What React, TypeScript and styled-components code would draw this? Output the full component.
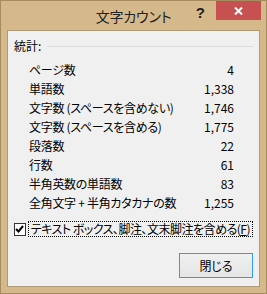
import React from 'react';
import styled, { createGlobalStyle } from 'styled-components';

const GlobalStyle = createGlobalStyle`
  html, body {
    margin: 0;
    padding: 0;
    background: #d5b98b;
  }
  body {
    font-family: "Noto Sans CJK JP", "Noto Sans", sans-serif;
    font-feature-settings: "palt";
    color: #000;
  }
`;

const Window = styled.div`
  width: 267px;
  height: 294px;
  box-sizing: border-box;
  background: #d5b98b;
  border: 1px solid #a68c5f;
  display: flex;
  flex-direction: column;
`;

const TitleBar = styled.div`
  height: 29px;
  display: grid;
  grid-template-columns: 1fr auto 1fr;
  align-items: start;
`;

const Title = styled.div`
  font-size: 14px;
  line-height: 28px;
  color: #222;
  letter-spacing: -0.2px;
  padding-top: 1px;
`;

const Controls = styled.div`
  display: flex;
  justify-content: flex-end;
  align-items: flex-start;
  padding-right: 5px;
`;

const HelpButton = styled.div`
  font-family: "Liberation Sans", Arial, sans-serif;
  font-weight: 700;
  font-size: 15px;
  line-height: 15px;
  color: #222;
  margin: 4px 11px 0 0;
`;

const CloseButton = styled.div`
  width: 45px;
  height: 19px;
  background: #c75050;
  display: flex;
  align-items: center;
  justify-content: center;
`;

const Panel = styled.div`
  flex: 1;
  margin: 0 6px 6px;
  background: #f0f0f0;
  border: 1px solid #ad9a78;
  display: flex;
  flex-direction: column;
  padding: 7px 6px 8px 6px;
`;

const SectionHeader = styled.div`
  display: flex;
  align-items: center;
  gap: 6px;
  font-size: 12px;
  line-height: 16px;
`;

const Rule = styled.div`
  flex: 1;
  height: 1px;
  background: #dcdcdc;
`;

const StatList = styled.div`
  display: grid;
  grid-template-columns: 1fr auto;
  grid-auto-rows: 19px;
  align-items: center;
  margin: 6px 19px 0 15px;
  font-size: 12px;
`;

const StatLabel = styled.div`
  white-space: nowrap;
  letter-spacing: -0.3px;
`;

const StatValue = styled.div`
  text-align: right;
`;

const CheckRow = styled.label`
  display: flex;
  align-items: center;
  gap: 2px;
  margin-top: 9px;
  font-size: 12px;
`;

const CheckBox = styled.div`
  width: 11px;
  height: 11px;
  border: 1px solid #333;
  background: #fff;
  display: flex;
  align-items: center;
  justify-content: center;
`;

const FocusLabel = styled.span`
  border: 1px dotted #000;
  padding: 0 2px;
  line-height: 14px;
  white-space: nowrap;
  letter-spacing: -0.5px;
`;

const Footer = styled.div`
  margin-top: auto;
  display: flex;
  justify-content: flex-end;
`;

const Button = styled.button<{ isDefault?: boolean }>`
  width: 74px;
  height: 25px;
  box-sizing: border-box;
  font-family: inherit;
  font-feature-settings: "palt";
  font-size: 12px;
  color: #000;
  border: 1px solid ${p => (p.isDefault ? '#3399ff' : '#acacac')};
  background: linear-gradient(#f0f0f0, #e5e5e5);
  padding: 0;
`;

const stats = [
  { label: 'ページ数', value: '4' },
  { label: '単語数', value: '1,338' },
  { label: '文字数 (スペースを含めない)', value: '1,746' },
  { label: '文字数 (スペースを含める)', value: '1,775' },
  { label: '段落数', value: '22' },
  { label: '行数', value: '61' },
  { label: '半角英数の単語数', value: '83' },
  { label: '全角文字 + 半角カタカナの数', value: '1,255' },
];

export default function App() {
  return (
    <>
      <GlobalStyle />
      <Window>
        <TitleBar>
          <div />
          <Title>文字カウント</Title>
          <Controls>
            <HelpButton>?</HelpButton>
            <CloseButton>
              <svg width="9" height="8" viewBox="0 0 9 8">
                <path d="M1 0.5 L8 7.5 M8 0.5 L1 7.5" stroke="#fff" strokeWidth="2" />
              </svg>
            </CloseButton>
          </Controls>
        </TitleBar>
        <Panel>
          <SectionHeader>
            統計:
            <Rule />
          </SectionHeader>
          <StatList>
            {stats.map(s => (
              <React.Fragment key={s.label}>
                <StatLabel>{s.label}</StatLabel>
                <StatValue>{s.value}</StatValue>
              </React.Fragment>
            ))}
          </StatList>
          <CheckRow>
            <CheckBox>
              <svg width="9" height="8" viewBox="0 0 9 8">
                <path d="M1 4 L3.5 6.5 L8 1" stroke="#000" strokeWidth="2" fill="none" />
              </svg>
            </CheckBox>
            <FocusLabel>
              テキスト ボックス、脚注、文末脚注を含める(<u>F</u>)
            </FocusLabel>
          </CheckRow>
          <Footer>
            <Button isDefault>閉じる</Button>
          </Footer>
        </Panel>
      </Window>
    </>
  );
}
